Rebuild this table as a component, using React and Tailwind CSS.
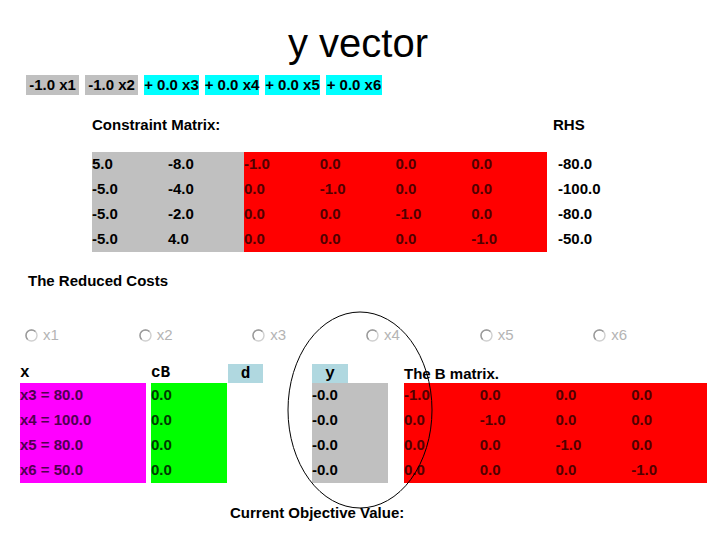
const terms = [
  { t: "-1.0 x1", w: "w-[53px]", bg: "bg-[#c0c0c0]" },
  { t: "-1.0 x2", w: "w-[53px]", bg: "bg-[#c0c0c0]" },
  { t: "+ 0.0 x3", w: "w-[55px]", bg: "bg-[#00ffff]" },
  { t: "+ 0.0 x4", w: "w-[54px]", bg: "bg-[#00ffff]" },
  { t: "+ 0.0 x5", w: "w-[55px]", bg: "bg-[#00ffff]" },
  { t: "+ 0.0 x6", w: "w-[56px]", bg: "bg-[#00ffff]" },
];

const A = [
  ["5.0", "-8.0"],
  ["-5.0", "-4.0"],
  ["-5.0", "-2.0"],
  ["-5.0", "4.0"],
];

const I = [
  ["-1.0", "0.0", "0.0", "0.0"],
  ["0.0", "-1.0", "0.0", "0.0"],
  ["0.0", "0.0", "-1.0", "0.0"],
  ["0.0", "0.0", "0.0", "-1.0"],
];

const rhs = ["-80.0", "-100.0", "-80.0", "-50.0"];
const basis = ["x3 = 80.0", "x4 = 100.0", "x5 = 80.0", "x6 = 50.0"];

function Radio({ label }) {
  return (
    <div className="flex items-center gap-[5px]">
      <svg width="13" height="13" viewBox="0 0 13 13">
        <circle cx="6.5" cy="6.5" r="5.5" fill="#fff" stroke="#d0d0d0" strokeWidth="1.4" />
        <path d="M2.6 10.4 A5.5 5.5 0 0 1 10.4 2.6" fill="none" stroke="#9a9a9a" strokeWidth="1.4" />
      </svg>
      <span className="text-[15px] leading-[20px] text-[#b4b4b4]">{label}</span>
    </div>
  );
}

function Cells({ rows, cols, bg, color, width }) {
  return (
    <div className={`grid ${cols} ${bg} ${width}`}>
      {rows.flat().map((v, i) => (
        <div key={i} className={`h-[25px] flex items-center whitespace-nowrap text-[15px] font-bold ${color}`}>
          {v}
        </div>
      ))}
    </div>
  );
}

const mono = { fontFamily: '"Liberation Mono", "Courier New", monospace' };

export default function App() {
  return (
    <div
      className="relative w-[720px] h-[540px] bg-white overflow-hidden text-black"
      style={{ fontFamily: '"Liberation Sans", Arial, sans-serif' }}
    >
      <h1 className="mt-[20px] text-[40px] leading-[46px] text-center pr-[4px]">y vector</h1>

      <div className="flex gap-[6px] pl-[26px] mt-[9px]">
        {terms.map((x) => (
          <div key={x.t} className={`${x.w} ${x.bg} h-[20px] flex items-center justify-center whitespace-nowrap text-[15px] font-bold`}>
            {x.t}
          </div>
        ))}
      </div>

      <div className="flex pl-[92px] mt-[21px] text-[15px] leading-[18px] font-bold">
        <div className="w-[461px]">Constraint Matrix:</div>
        <div>RHS</div>
      </div>

      <div className="flex pl-[92px] mt-[18px]">
        <Cells rows={A} cols="grid-cols-2" bg="bg-[#c0c0c0]" color="text-black" width="w-[152px]" />
        <Cells rows={I} cols="grid-cols-4" bg="bg-[#ff0000]" color="text-[#500000]" width="w-[303px]" />
        <div className="ml-[11px] flex flex-col">
          {rhs.map((v, i) => (
            <div key={i} className="h-[25px] flex items-center text-[15px] font-bold">{v}</div>
          ))}
        </div>
      </div>

      <div className="pl-[28px] mt-[20px] text-[15px] leading-[18px] font-bold">The Reduced Costs</div>

      <div className="grid grid-cols-6 w-[707px] pl-[25px] mt-[35px] h-[20px]">
        {["x1", "x2", "x3", "x4", "x5", "x6"].map((l) => (
          <Radio key={l} label={l} />
        ))}
      </div>

      <div className="flex pl-[20px] mt-[19px] h-[19px] items-start">
        <div className="w-[131px] text-[16px] leading-[19px] font-bold" style={mono}>x</div>
        <div className="w-[77px] text-[16px] leading-[19px] font-bold" style={mono}>cB</div>
        <div className="w-[35px] h-[19px] bg-[#b0d8e0] flex items-center justify-center text-[16px] font-bold" style={mono}>d</div>
        <div className="w-[49px]" />
        <div className="w-[36px] h-[19px] bg-[#b0d8e0] flex items-center justify-center text-[16px] font-bold" style={mono}>y</div>
        <div className="w-[56px]" />
        <div className="text-[15px] leading-[19px] font-bold">The B matrix.</div>
      </div>

      <div className="flex pl-[20px]">
        <Cells rows={basis.map((b) => [b])} cols="grid-cols-1" bg="bg-[#ff00ff]" color="text-[#500050]" width="w-[126px]" />
        <Cells rows={basis.map(() => ["0.0"])} cols="grid-cols-1" bg="bg-[#00ff00]" color="text-[#003a00]" width="w-[76px] ml-[5px]" />
        <Cells rows={basis.map(() => ["-0.0"])} cols="grid-cols-1" bg="bg-[#c0c0c0]" color="text-black" width="w-[76px] ml-[85px]" />
        <Cells rows={I} cols="grid-cols-4" bg="bg-[#ff0000]" color="text-[#500000]" width="w-[303px] ml-[16px]" />
      </div>

      <div className="pl-[230px] mt-[21px] text-[15px] leading-[18px] font-bold">Current Objective Value:</div>

      <svg className="absolute inset-0 pointer-events-none" width="720" height="540">
        <ellipse cx="360" cy="410" rx="72" ry="98" fill="none" stroke="#000" strokeWidth="1" />
      </svg>
    </div>
  );
}
